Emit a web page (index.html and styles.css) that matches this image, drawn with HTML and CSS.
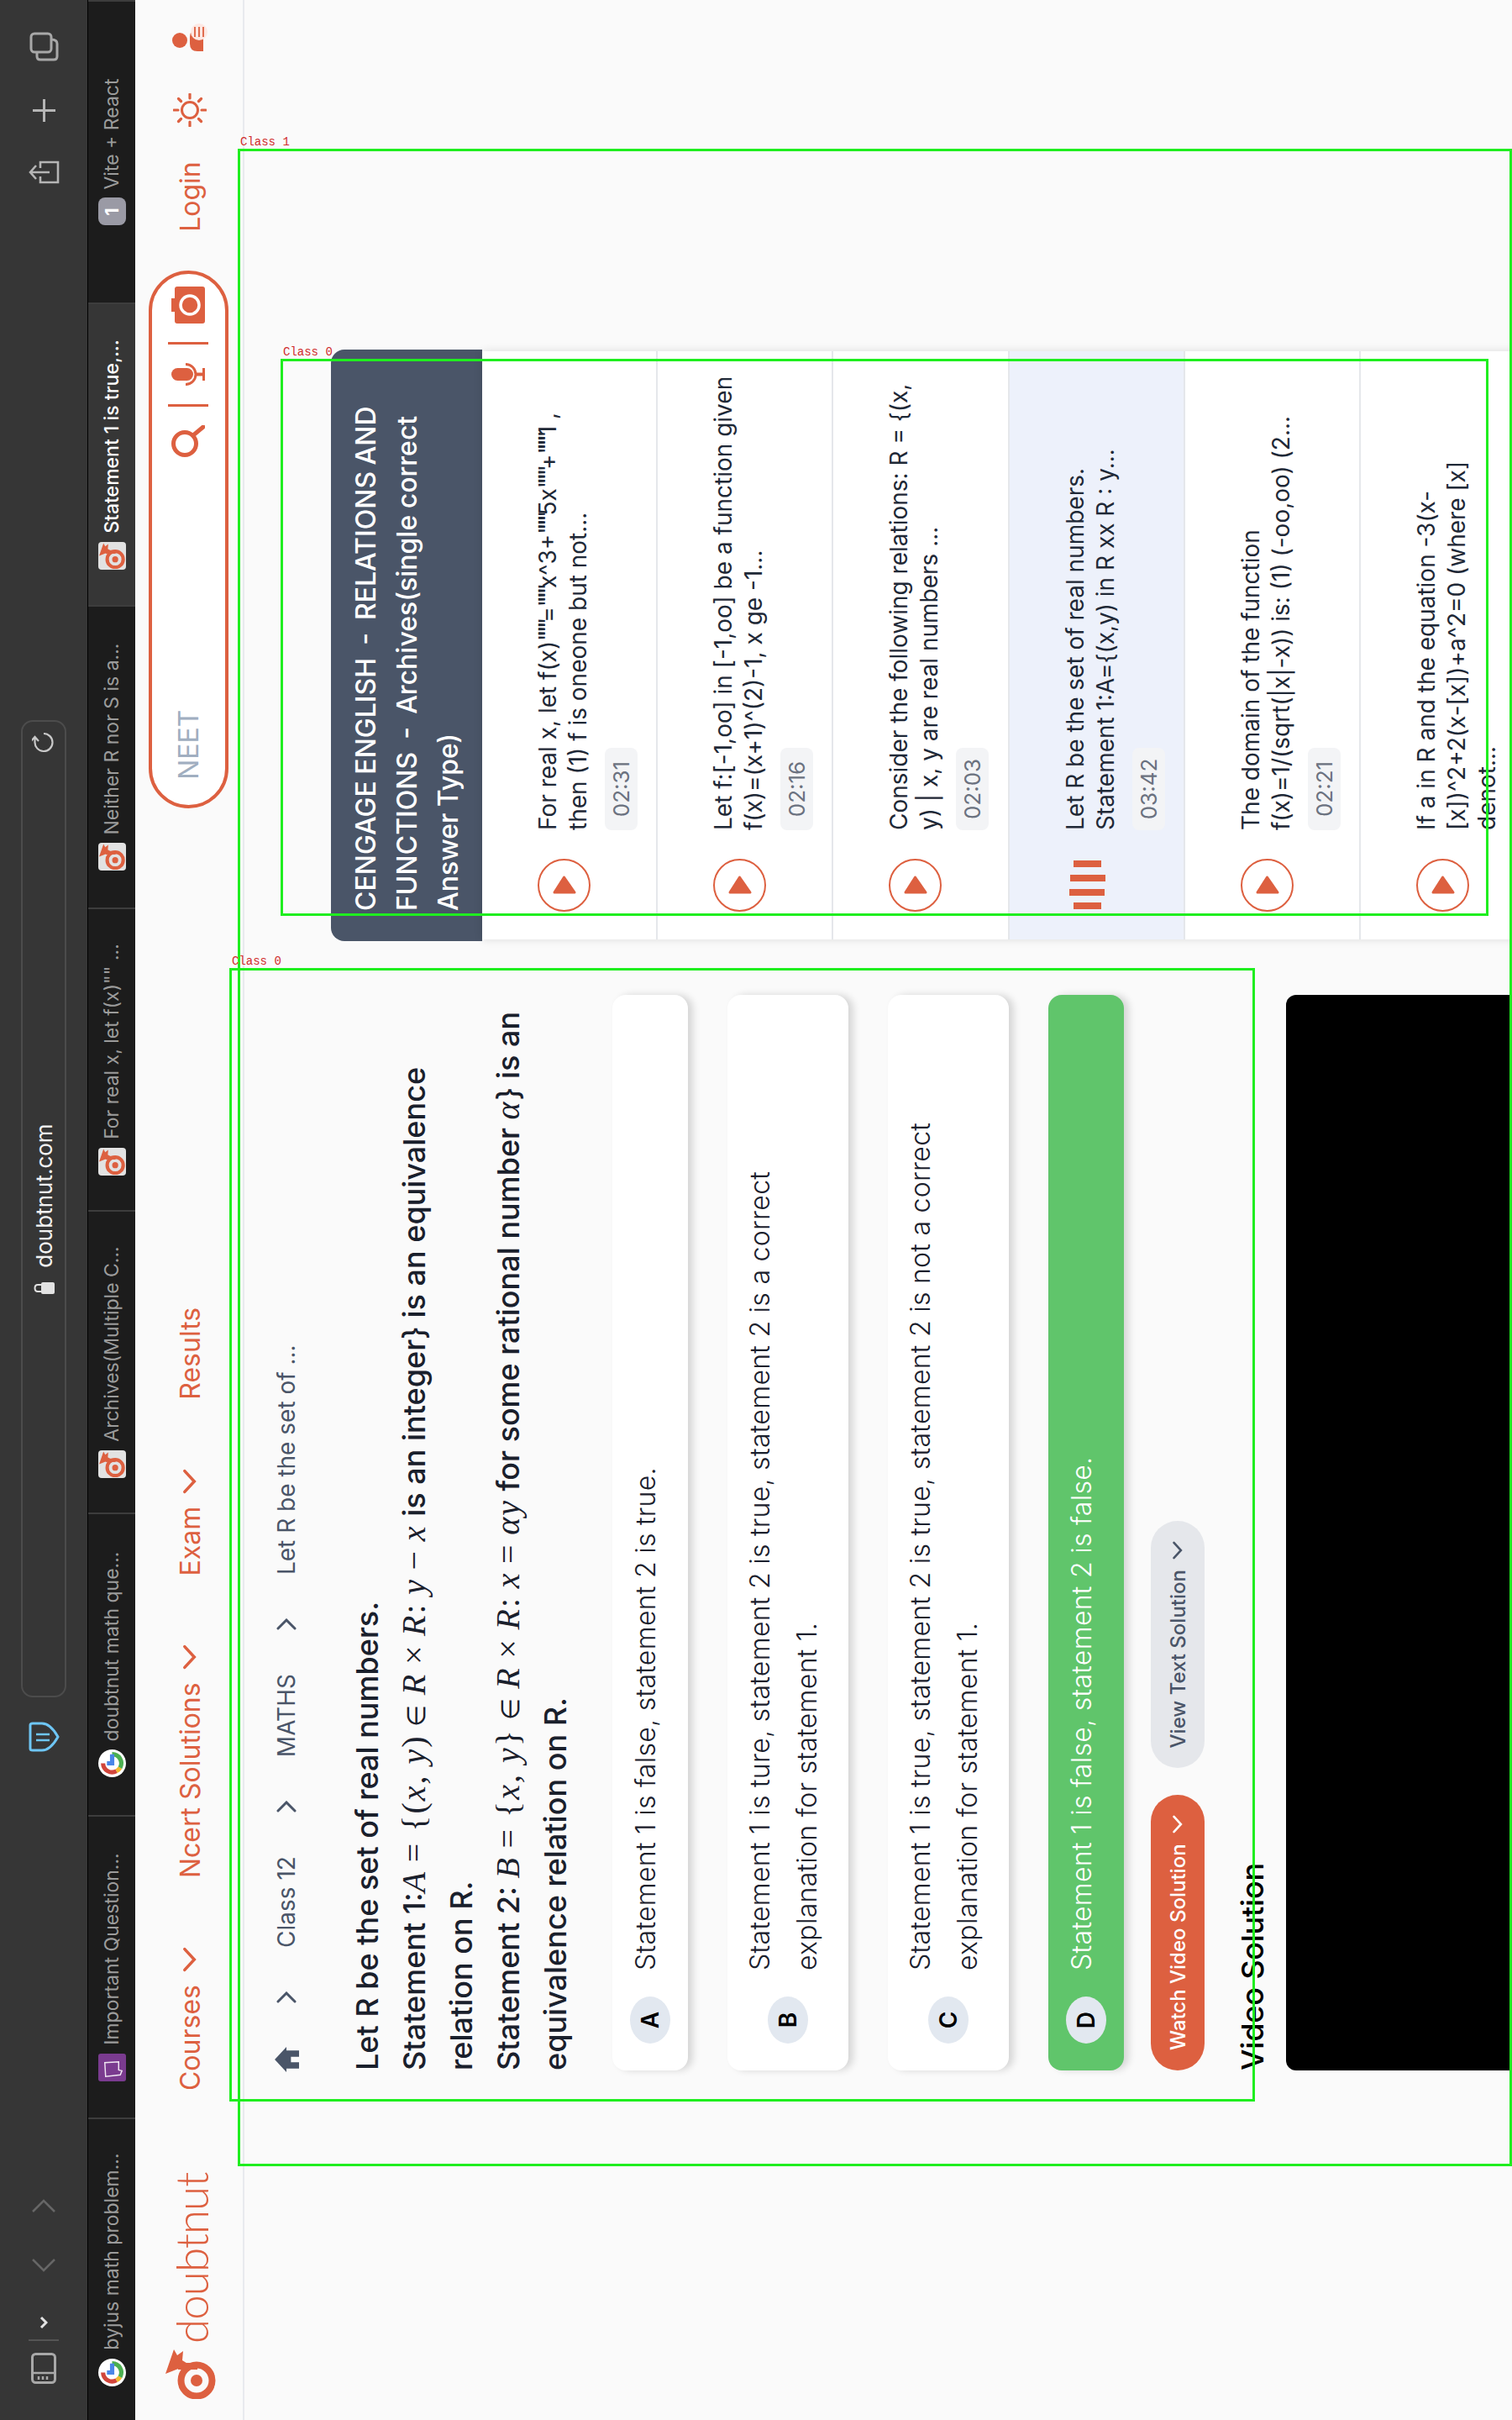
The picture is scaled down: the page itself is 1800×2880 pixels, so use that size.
FILE: index.html
```html
<!DOCTYPE html>
<html lang="en">

<head>
    <meta charset="utf-8">
    <title>Statement 1 is true,...</title>
    <link rel="stylesheet" href="styles.css">
</head>

<body>
    <svg class="defs" width="0" height="0">
        <symbol id="mark" viewBox="0 0 60 62">
            <circle cx="22" cy="39" r="18.5" fill="none" stroke="currentColor" stroke-width="8"/>
            <circle cx="22" cy="39" r="7" fill="currentColor"/>
            <rect x="35" y="17" width="8" height="23" fill="currentColor"/>
            <path d="M30 2 59 12 52 16 57 23 46 22 41 30Z" fill="currentColor"/>
        </symbol>
        <symbol id="google" viewBox="0 0 32 32">
            <circle cx="16" cy="16" r="16" fill="#fff"/>
            <path d="M7 21A10.500 10.500 0 0 1 16 5.500" fill="none" stroke="#d1453b" stroke-width="5"/>
            <path d="M7 21A10.500 10.500 0 0 0 11 25.300" fill="none" stroke="#f2b92f" stroke-width="5"/>
            <path d="M11 25.300A10.500 10.500 0 0 0 26.500 16" fill="none" stroke="#4caf50" stroke-width="5"/>
            <path d="M26.500 16H16V10" fill="none" stroke="#4a86e8" stroke-width="5"/>
        </symbol>
        <symbol id="chev" viewBox="0 0 34 20">
            <path d="M3 3 17 16 31 3" fill="none" stroke="currentColor" stroke-width="4" stroke-linecap="round"/>
        </symbol>
        <symbol id="crumb" viewBox="0 0 14 24">
            <path d="M2 2 12 12 2 22" fill="none" stroke="currentColor" stroke-width="3" stroke-linecap="round"/>
        </symbol>
        <symbol id="play" viewBox="0 0 63 63">
            <circle cx="31.500" cy="31.500" r="30.500" fill="#fff" stroke="#dd6040" stroke-width="2"/>
            <path d="M23 20 41 31.500 23 44Z" fill="#dd6040" stroke="#dd6040" stroke-width="3" stroke-linejoin="round"/>
        </symbol>
    </svg>

    <div class="stage">
        <div class="screen">

            <div class="toolbar">
                <svg class="tb-icon sidebar-ic" viewBox="0 0 37 30">
                    <rect x="1.500" y="1.500" width="34" height="27" rx="4" fill="none" stroke="#a8a8a8" stroke-width="3"/>
                    <path d="M13 2V28M5 9H9M5 14H9M5 19H9" fill="none" stroke="#a8a8a8" stroke-width="2.500"/>
                </svg>
                <span class="tb-sep"></span>
                <svg class="tb-icon small-chev" viewBox="0 0 16 10">
                    <path d="M2 2 8 8 14 2" fill="none" stroke="#e2e2e2" stroke-width="3"/>
                </svg>
                <svg class="tb-icon back-ic" viewBox="0 0 18 30">
                    <path d="M16 2 3 15 16 28" fill="none" stroke="#666" stroke-width="2.500"/>
                </svg>
                <svg class="tb-icon fwd-ic" viewBox="0 0 18 30">
                    <path d="M2 2 15 15 2 28" fill="none" stroke="#666" stroke-width="2.500"/>
                </svg>
                <svg class="tb-icon shield-ic" viewBox="0 0 38 38">
                    <path d="M5 3H33Q35 3 35 6V17Q35 27 19 36 3 27 3 17V6Q3 3 5 3Z" fill="none" stroke="#6ec6f5" stroke-width="3"/>
                    <path d="M15 10V26M22 10V26" fill="none" stroke="#6ec6f5" stroke-width="2.500"/>
                </svg>
                <div class="addr">
                    <span></span>
                    <div class="addr-mid">
                        <svg class="lock-ic" viewBox="0 0 14 25">
                            <rect x="0" y="9" width="14" height="16" rx="2" fill="#e2e2e2"/>
                            <path d="M3 10V5Q3 1.500 7 1.500 11 1.500 11 5V10" fill="none" stroke="#e2e2e2" stroke-width="2"/>
                        </svg>
                        <span class="addr-text">doubtnut.com</span>
                    </div>
                    <svg class="reload-ic" viewBox="0 0 28 28">
                        <path d="M24 14A10.500 10.500 0 1 1 14 3.500H20M15 -1 20 3.500 15 8" fill="none" stroke="#c8c8c8" stroke-width="2.200"/>
                    </svg>
                </div>
                <svg class="tb-icon share-ic" viewBox="0 0 30 37">
                    <path d="M10 14H3V35H27V14H20M15 25V2M7 9 15 2 23 9" fill="none" stroke="#b5b5b5" stroke-width="2.600"/>
                </svg>
                <svg class="tb-icon plus-ic" viewBox="0 0 27 27">
                    <path d="M13.500 0V27M0 13.500H27" stroke="#b5b5b5" stroke-width="3"/>
                </svg>
                <svg class="tb-icon tabs-ic" viewBox="0 0 35 35">
                    <rect x="11" y="2" width="22" height="24" rx="4" fill="none" stroke="#a8a8a8" stroke-width="3"/>
                    <path d="M11 9H6Q2 9 2 13V29Q2 33 6 33H21Q26 33 26 26" fill="none" stroke="#a8a8a8" stroke-width="3"/>
                </svg>
            </div>

            <div class="tabs">
                <div class="tab">
                    <svg class="fav"><use href="#google"/></svg>
                    <span>byjus math problem...</span>
                </div>
                <div class="tab">
                    <svg class="fav" viewBox="0 0 34 34">
                        <rect width="34" height="34" rx="3" fill="#7a3b8f"/>
                        <path d="M6 9 23 8 24 25 14 25 13 29 8 27Z" fill="none" stroke="#f0e6f2" stroke-width="1.500"/>
                    </svg>
                    <span>Important Question...</span>
                </div>
                <div class="tab">
                    <svg class="fav"><use href="#google"/></svg>
                    <span>doubtnut math que...</span>
                </div>
                <div class="tab">
                    <span class="fav dn-fav"><svg><use href="#mark"/></svg></span>
                    <span>Archives(Multiple C...</span>
                </div>
                <div class="tab">
                    <span class="fav dn-fav"><svg><use href="#mark"/></svg></span>
                    <span>For real x, let f(x)"" ...</span>
                </div>
                <div class="tab">
                    <span class="fav dn-fav"><svg><use href="#mark"/></svg></span>
                    <span>Neither R nor S is a...</span>
                </div>
                <div class="tab tab-on">
                    <span class="fav dn-fav"><svg><use href="#mark"/></svg></span>
                    <span>Statement 1 is true,...</span>
                </div>
                <div class="tab">
                    <span class="fav num-fav">1</span>
                    <span>Vite + React</span>
                </div>
            </div>

            <nav class="nav">
                <div class="logo">
                    <svg class="logo-mark"><use href="#mark"/></svg>
                    <span class="logo-text">doubtnut</span>
                </div>
                <div class="menu">
                    <a class="menu-item">Courses <svg class="menu-chev"><use href="#chev"/></svg></a>
                    <a class="menu-item">Ncert Solutions <svg class="menu-chev"><use href="#chev"/></svg></a>
                    <a class="menu-item">Exam <svg class="menu-chev"><use href="#chev"/></svg></a>
                    <a class="menu-item">Results</a>
                </div>
                <div class="search">
                    <span class="search-text">NEET</span>
                    <svg class="search-ic" viewBox="0 0 39 40">
                        <circle cx="17" cy="16" r="13.500" fill="none" stroke="#dd6040" stroke-width="5"/>
                        <path d="M27 26 37 38" stroke="#dd6040" stroke-width="5" stroke-linecap="round"/>
                    </svg>
                    <span class="search-sep"></span>
                    <svg class="mic-ic" viewBox="0 0 27 40">
                        <rect x="6" y="0" width="15" height="26" rx="7.500" fill="#dd6040"/>
                        <path d="M1.500 17A12 12 0 0 0 25.500 17" fill="none" stroke="#dd6040" stroke-width="3"/>
                        <path d="M13.500 29V38" stroke="#dd6040" stroke-width="4"/>
                        <path d="M6 38.500H21" stroke="#dd6040" stroke-width="3"/>
                    </svg>
                    <span class="search-sep"></span>
                    <svg class="cam-ic" viewBox="0 0 44 40">
                        <path d="M14 0H30V4H41Q44 4 44 7V37Q44 40 41 40H3Q0 40 0 37V7Q0 4 3 4H14Z" fill="#dd6040"/>
                        <circle cx="22" cy="22" r="11" fill="none" stroke="#fff" stroke-width="3.500"/>
                    </svg>
                </div>
                <a class="login">Login</a>
                <svg class="sun-ic" viewBox="0 0 40 40">
                    <circle cx="20" cy="20" r="9.500" fill="none" stroke="#dd6040" stroke-width="3"/>
                    <path d="M20 1V6M20 34V39M1 20H6M34 20H39M6.500 6.500 9.500 9.500M30.500 30.500 33.500 33.500M6.500 33.500 9.500 30.500M30.500 9.500 33.500 6.500" stroke="#dd6040" stroke-width="3.200" stroke-linecap="round"/>
                </svg>
                <svg class="user-ic" viewBox="0 0 36 42">
                    <circle cx="15" cy="9" r="9" fill="#dd6040"/>
                    <path d="M2 37V30Q2 21 11 21H19Q28 21 28 30V37Z" fill="#dd6040"/>
                    <circle cx="25" cy="32" r="10" fill="#fde8e3"/>
                    <path d="M19 27H31M19 32H31M19 37H31" stroke="#dd6040" stroke-width="1.800"/>
                </svg>
            </nav>

            <main class="main">
                <section class="left">
                    <div class="crumbs">
                        <svg class="home-ic" viewBox="0 0 28 28">
                            <path d="M14 1 28 14H24V28H17V19H11V28H4V14H0Z" fill="#4a5568"/>
                        </svg>
                        <svg class="crumb-ic"><use href="#crumb"/></svg>
                        <span>Class 12</span>
                        <svg class="crumb-ic"><use href="#crumb"/></svg>
                        <span>MATHS</span>
                        <svg class="crumb-ic"><use href="#crumb"/></svg>
                        <span>Let R be the set of ...</span>
                    </div>

                    <h1 class="question">
                        Let R be the set of real numbers.<br>
                        Statement 1:<i class="m">A</i> <span class="m">= {(</span><i class="m">x, y</i><span class="m">)</span> <span class="el">∈</span> <i class="m">R</i> <span class="m">×</span> <i class="m">R</i><span class="m">:</span> <i class="m">y</i> <span class="m">−</span> <i class="m">x</i> is an integer} is an equivalence<br>
                        relation on R.<br>
                        Statement 2: <i class="m">B</i> <span class="m">= {</span><i class="m">x, y</i><span class="m">}</span> <span class="el">∈</span> <i class="m">R</i> <span class="m">×</span> <i class="m">R</i><span class="m">:</span> <i class="m">x</i> <span class="m">=</span> <i class="m">αy</i> for some rational number <i class="m">α</i>} is an<br>
                        equivalence relation on R.
                    </h1>

                    <div class="options">
                        <div class="option">
                            <span class="letter">A</span>
                            <p>Statement 1 is false, statement 2 is true.</p>
                        </div>
                        <div class="option">
                            <span class="letter">B</span>
                            <p>Statement 1 is ture, statement 2 is true, statement 2 is a correct<br>explanation for statement 1.</p>
                        </div>
                        <div class="option">
                            <span class="letter">C</span>
                            <p>Statement 1 is true, statement 2 is true, statement 2 is not a correct<br>explanation for statement 1.</p>
                        </div>
                        <div class="option option-right">
                            <span class="letter">D</span>
                            <p>Statement 1 is false, statement 2 is false.</p>
                        </div>
                    </div>

                    <div class="btns">
                        <button class="btn btn-video">Watch Video Solution <svg class="btn-chev"><use href="#chev"/></svg></button>
                        <button class="btn btn-text">View Text Solution <svg class="btn-chev"><use href="#chev"/></svg></button>
                    </div>

                    <h2 class="video-title">Video Solution</h2>
                    <div class="video"></div>
                </section>

                <aside class="side">
                    <div class="side-head">CENGAGE ENGLISH &nbsp;-&nbsp; RELATIONS AND<br>FUNCTIONS &nbsp;-&nbsp; Archives(single correct<br>Answer Type)</div>
                    <div class="list">
                        <div class="item">
                            <svg class="play"><use href="#play"/></svg>
                            <div class="item-body">
                                <p>For real x, let f(x)<span class="q">""""</span>=<span class="q">""""</span>x^3+<span class="q">""""</span>5x<span class="q">""""</span>+<span class="q">""""</span>1 ,<br>then (1) f is oneone but not...</p>
                                <span class="time">02:31</span>
                            </div>
                        </div>
                        <div class="item">
                            <svg class="play"><use href="#play"/></svg>
                            <div class="item-body">
                                <p>Let f:[-1,oo] in [-1,oo] be a function given<br>f(x)=(x+1)^(2)-1, x ge -1...</p>
                                <span class="time">02:16</span>
                            </div>
                        </div>
                        <div class="item">
                            <svg class="play"><use href="#play"/></svg>
                            <div class="item-body">
                                <p>Consider the following relations: R = {(x,<br>y) | x, y are real numbers ...</p>
                                <span class="time">02:03</span>
                            </div>
                        </div>
                        <div class="item item-on">
                            <svg class="bars" viewBox="0 0 58 43">
                                <path d="M0 5H8V38H0ZM16 0H24V42H16ZM33 1H41V43H33ZM50 5H58V38H50Z" fill="#dd6040"/>
                            </svg>
                            <div class="item-body">
                                <p>Let R be the set of real numbers.<br>Statement 1:A={(x,y) in R xx R : y...</p>
                                <span class="time">03:42</span>
                            </div>
                        </div>
                        <div class="item">
                            <svg class="play"><use href="#play"/></svg>
                            <div class="item-body">
                                <p>The domain of the function<br>f(x)=1/(sqrt(|x|-x)) is: (1) (-oo,oo) (2...</p>
                                <span class="time">02:21</span>
                            </div>
                        </div>
                        <div class="item">
                            <svg class="play"><use href="#play"/></svg>
                            <div class="item-body">
                                <p>If a in R and the equation -3(x-<br>[x])^2+2(x-[x])+a^2=0 (where [x]<br>denot...</p>
                            </div>
                        </div>
                    </div>
                </aside>
            </main>
        </div>

        <!-- detection boxes burnt into the picture, they stay upright -->
        <div class="box box-class1"><span class="box-label">Class 1</span></div>
        <div class="box box-list"><span class="box-label">Class 0</span></div>
        <div class="box box-left"><span class="box-label">Class 0</span></div>
    </div>
</body>

</html>
```

FILE: styles.css
```css
html,
body {
    margin: 0;
    padding: 0;
    width: 1800px;
    height: 2880px;
    overflow: hidden;
    background: #fafafa;
    font-family: Inter, "Noto Sans", sans-serif;
}

.defs {
    display: block;
    height: 0;
}

.stage {
    width: 1800px;
    height: 2880px;
    position: relative;
    overflow: hidden;
}

/* the whole tablet page lies on its side */
.screen {
    width: 2880px;
    height: 1800px;
    overflow: hidden;
    background: #fafafa;
    transform-origin: 0 0;
    transform: translateY(2880px) rotate(-90deg);
}

/* browser top bar */
.toolbar {
    height: 104px;
    background: #363636;
    border-bottom: 1px solid #000;
    display: flex;
    align-items: center;
    padding-left: 43px;
}

.tb-icon {
    flex: none;
}

.sidebar-ic {
    width: 37px;
    height: 30px;
}

.tb-sep {
    width: 2px;
    height: 36px;
    background: #555;
    margin-left: 14px;
}

.small-chev {
    width: 16px;
    height: 10px;
    margin-left: 12px;
}

.back-ic {
    width: 18px;
    height: 30px;
    margin-left: 51px;
}

.fwd-ic {
    width: 18px;
    height: 30px;
    margin-left: 53px;
}

.shield-ic {
    width: 38px;
    height: 38px;
    margin-left: 530px;
}

.addr {
    width: 1163px;
    height: 54px;
    margin-left: 28px;
    box-sizing: border-box;
    border: 2px solid #4c4c4c;
    border-radius: 14px;
    display: grid;
    grid-template-columns: 1fr auto 1fr;
    align-items: center;
}

.addr-mid {
    display: flex;
    align-items: center;
    gap: 17px;
}

.lock-ic {
    width: 14px;
    height: 25px;
}

.addr-text {
    color: #f2f2f2;
    font-size: 26px;
}

.reload-ic {
    width: 28px;
    height: 28px;
    justify-self: end;
    margin-right: 10px;
}

.share-ic {
    width: 30px;
    height: 37px;
    margin-left: 637px;
}

.plus-ic {
    width: 27px;
    height: 27px;
    margin-left: 45px;
}

.tabs-ic {
    width: 35px;
    height: 35px;
    margin-left: 45px;
}

/* tab strip */
.tabs {
    display: flex;
    height: 56px;
    background: #1c1c1c;
    border-bottom: 2px solid #fff;
}

.tab {
    width: 360px;
    flex: none;
    box-sizing: border-box;
    border-right: 2px solid #3d3d3d;
    display: flex;
    align-items: center;
    justify-content: center;
    gap: 10px;
    color: #9b9b9b;
    font-size: 23px;
    white-space: nowrap;
}

.tab-on {
    background: #363636;
    color: #fff;
    font-weight: 500;
}

.fav {
    width: 33px;
    height: 33px;
    flex: none;
}

.dn-fav {
    background: #e2e2e2;
    border-radius: 4px;
    color: #dd6040;
    display: flex;
    align-items: center;
    justify-content: center;
}

.dn-fav svg {
    width: 31px;
    height: 32px;
}

.num-fav {
    background: #9a9aa5;
    border-radius: 8px;
    color: #fff;
    font-size: 22px;
    font-weight: 700;
    text-align: center;
    line-height: 33px;
}

/* site header */
.nav {
    height: 128px;
    box-sizing: border-box;
    border-bottom: 2px solid #e8eaee;
    display: flex;
    align-items: center;
    padding-left: 25px;
    color: #dd6040;
}

.logo {
    display: flex;
    align-items: flex-end;
    width: 272px;
}

.logo-mark {
    width: 60px;
    height: 62px;
    color: #dd6040;
    flex: none;
}

.logo-text {
    font-family: Lato, sans-serif;
    font-weight: 300;
    font-size: 53px;
    line-height: 58px;
    margin-left: 6px;
    letter-spacing: -1px;
}

.menu {
    display: flex;
    gap: 82px;
    margin-left: 95px;
    font-size: 32px;
}

.menu-item {
    display: flex;
    align-items: center;
    gap: 15px;
}

.menu-chev {
    width: 30px;
    height: 18px;
}

.search {
    width: 640px;
    height: 95px;
    box-sizing: border-box;
    border: 4px solid #dd6040;
    border-radius: 48px;
    background: #fff;
    margin: 0 0 4px 594px;
    padding: 0 15px 0 30px;
    display: flex;
    align-items: center;
}

.search-text {
    color: #a0aec0;
    font-size: 32px;
    flex: 1;
}

.search-ic {
    width: 39px;
    height: 40px;
}

.search-sep {
    width: 3px;
    height: 48px;
    background: #dd6040;
    margin: 0 22px;
}

.mic-ic {
    width: 27px;
    height: 40px;
}

.cam-ic {
    width: 44px;
    height: 40px;
}

.login {
    font-size: 32px;
    margin-left: 46px;
}

.sun-ic {
    width: 40px;
    height: 40px;
    margin-left: 41px;
}

.user-ic {
    width: 36px;
    height: 42px;
    margin-left: 48px;
}

/* page body */
.main {
    display: flex;
    align-items: flex-start;
    padding-left: 416px;
}

.left {
    width: 1280px;
    flex: none;
    padding-top: 34px;
}

.crumbs {
    height: 32px;
    display: flex;
    align-items: center;
    color: #4a5568;
    font-size: 28px;
}

.home-ic {
    width: 30px;
    height: 30px;
    margin-left: -2px;
}

.crumb-ic {
    width: 14px;
    height: 24px;
    margin: 0 52px;
}

.question {
    margin: 52px 0 40px;
    font-size: 36px;
    font-weight: 500;
    line-height: 56px;
    color: #1a202c;
}

.m {
    font-family: "Liberation Serif", serif;
    font-weight: 400;
    font-size: 40px;
    letter-spacing: 2px;
    line-height: 0;
}

.el {
    font-family: "Liberation Serif", serif;
    font-weight: 400;
    font-size: 30px;
    letter-spacing: 2px;
    line-height: 0;
}

.options {
    display: flex;
    flex-direction: column;
    gap: 47px;
}

.option {
    display: flex;
    align-items: center;
    gap: 31px;
    padding: 11px 32px 21px;
    background: #fff;
    border-radius: 16px;
    box-shadow: 0 6px 8px rgba(0, 0, 0, 0.14);
    color: #1a202c;
    font-size: 32px;
    font-weight: 300;
    letter-spacing: 0.280px;
    line-height: 56px;
}

.option p {
    margin: 0;
}

.option-right {
    background: #60c56b;
    color: #fff;
}

.letter {
    width: 56px;
    height: 48px;
    flex: none;
    margin-top: 10px;
    background: #e2e8f0;
    border-radius: 50%;
    color: #000;
    font-size: 28px;
    font-weight: 600;
    letter-spacing: 0;
    line-height: 48px;
    text-align: center;
}

.btns {
    display: flex;
    gap: 32px;
    margin-top: 32px;
}

.btn {
    height: 64px;
    border: none;
    border-radius: 32px;
    padding: 0 24px;
    font-family: inherit;
    font-size: 24px;
    font-weight: 500;
    display: flex;
    align-items: center;
    gap: 12px;
}

.btn-chev {
    width: 22px;
    height: 14px;
}

.btn-video {
    background: #dd6040;
    color: #fff;
}

.btn-text {
    background: #e5e7eb;
    color: #4a5568;
}

.video-title {
    margin: 37px 0 20px;
    font-size: 36px;
    font-weight: 500;
    letter-spacing: -0.200px;
    line-height: 40px;
    color: #000;
}

.video {
    height: 720px;
    background: #000;
    border-radius: 12px;
}

/* playlist */
.side {
    width: 704px;
    flex: none;
    margin-left: 64px;
    padding-top: 103px;
}

.side-head {
    height: 180px;
    box-sizing: border-box;
    padding-left: 36px;
    background: #4a5568;
    border-radius: 16px 16px 0 0;
    color: #fff;
    font-size: 32px;
    font-weight: 500;
    word-spacing: -1px;
    line-height: 49px;
    display: flex;
    align-items: center;
}

.list {
    margin: 0 2px;
    background: #fff;
    box-shadow: 0 0 10px rgba(0, 0, 0, 0.12);
}

.item {
    height: 209.200px;
    box-sizing: border-box;
    border-bottom: 2px solid #e5e7eb;
    padding: 60px 0 0 33px;
    display: flex;
    gap: 32px;
}

.item-on {
    background: #edf1fb;
}

.play {
    width: 63px;
    height: 63px;
    flex: none;
    margin-top: 6px;
    margin-right: 2px;
}

.bars {
    width: 58px;
    height: 43px;
    flex: none;
    margin: 11px 4px 0 3px;
}

.item-body p {
    margin: 0;
    color: #1f2937;
    font-size: 28px;
    line-height: 36px;
    white-space: nowrap;
}

.q {
    letter-spacing: -8px;
    margin-right: 2px;
}

.time {
    display: inline-block;
    margin-top: 14px;
    width: 98px;
    height: 39px;
    border-radius: 8px;
    background: #f3f4f6;
    color: #6b7280;
    font-size: 26px;
    line-height: 39px;
    text-align: center;
}

/* green boxes with their red captions */
.box {
    position: absolute;
    box-sizing: border-box;
    border: 3px solid #1fee1f;
}

.box-class1 {
    left: 283px;
    top: 177px;
    width: 1517px;
    height: 2401px;
}

.box-list {
    left: 334px;
    top: 427px;
    width: 1438px;
    height: 663px;
}

.box-left {
    left: 273px;
    top: 1152px;
    width: 1221px;
    height: 1349px;
}

.box-label {
    position: absolute;
    left: 0;
    top: -18px;
    color: #d02c2c;
    font-family: "Liberation Mono", monospace;
    font-size: 14px;
    line-height: 14px;
    white-space: nowrap;
}
```
